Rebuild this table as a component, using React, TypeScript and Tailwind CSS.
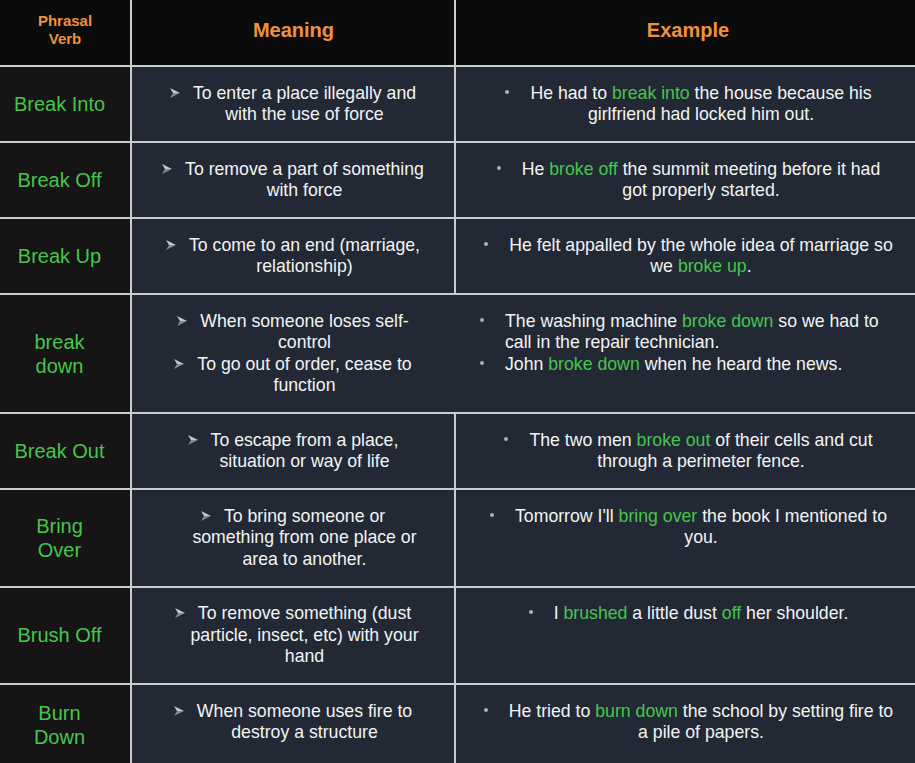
import React from "react";

type Row = {
  verb: string;
  meanings: string[];
  examples: string[];
  left?: boolean;
};

// green words are wrapped in [ ]
const rows: Row[] = [
  {
    verb: "Break Into",
    meanings: ["To enter a place illegally and with the use of force"],
    examples: ["He had to [break into] the house because his girlfriend had locked him out."],
  },
  {
    verb: "Break Off",
    meanings: ["To remove a part of something with force"],
    examples: ["He [broke off] the summit meeting before it had got properly started."],
  },
  {
    verb: "Break Up",
    meanings: ["To come to an end (marriage, relationship)"],
    examples: ["He felt appalled by the whole idea of marriage so we [broke up]."],
  },
  {
    verb: "break\ndown",
    meanings: ["When someone loses self-control", "To go out of order, cease to function"],
    examples: [
      "The washing machine [broke down] so we had to call in the repair technician.",
      "John [broke down] when he heard the news.",
    ],
    left: true,
  },
  {
    verb: "Break Out",
    meanings: ["To escape from a place, situation or way of life"],
    examples: ["The two men [broke out] of their cells and cut through a perimeter fence."],
  },
  {
    verb: "Bring\nOver",
    meanings: ["To bring someone or something from one place or area to another."],
    examples: ["Tomorrow I'll [bring over] the book I mentioned to you."],
  },
  {
    verb: "Brush Off",
    meanings: ["To remove something (dust particle, insect, etc) with your hand"],
    examples: ["I [brushed] a little dust [off] her shoulder."],
  },
  {
    verb: "Burn\nDown",
    meanings: ["When someone uses fire to destroy a structure"],
    examples: ["He tried to [burn down] the school by setting fire to a pile of papers."],
  },
];

const Arrow = () => (
  <span className="relative">
    <svg
      viewBox="0 0 10 10"
      className="absolute -left-[23px] top-[5px] w-[10px] h-[10px]"
    >
      <polygon points="0,0 10,5 3,5" fill="#c4c8cd" />
      <polygon points="3,5 10,5 0,10" fill="#858a91" />
    </svg>
  </span>
);

const Bullet = () => (
  <span className="relative">
    <span className="absolute -left-[25px] top-[7px] w-[4px] h-[4px] rounded-full bg-[#aab0b7]"></span>
  </span>
);

const Marked = ({ text }: { text: string }) => (
  <>
    {text.split(/\[|\]/).map((part, i) =>
      i % 2 === 1 ? (
        <span key={i} className="text-[#46c64c]">
          {part}
        </span>
      ) : (
        <React.Fragment key={i}>{part}</React.Fragment>
      )
    )}
  </>
);

const App = () => {
  return (
    <div className="h-screen overflow-hidden bg-[#c9cdd2] font-['Liberation_Sans',Arial,sans-serif]">
      <div className="flex flex-col gap-[2px]">
        {/* Header */}
        <div className="grid grid-cols-[130px_322px_1fr] gap-x-[2px] h-[65px] font-bold text-[#ef913f]">
          <div className="bg-[#0b0b0b] flex items-center justify-center text-center text-[15px] leading-[18px] pb-[5px]">
            Phrasal
            <br />
            Verb
          </div>
          <div className="bg-[#0b0b0b] flex items-center justify-center text-[20px] pb-[5px] pl-[1px]">
            Meaning
          </div>
          <div className="bg-[#0b0b0b] flex items-center justify-center text-[20px] pb-[5px] pl-[5px]">
            Example
          </div>
        </div>

        {rows.map((row, idx) => {
          const last = idx === rows.length - 1;
          return (
            <div
              key={row.verb}
              className="grid grid-cols-[130px_322px_1fr] gap-x-[2px] text-[17.7px] leading-[21.5px] text-[#f3f4f5]"
            >
              <div className="bg-[#161414] flex items-center justify-center text-center whitespace-pre-line text-[20px] leading-[24px] text-[#46c64c] pr-[11px]">
                {row.verb}
              </div>
              <div
                className={
                  "bg-[#222934] pl-[50px] pr-[27px] pt-[15.5px] text-center " +
                  (last ? "pb-[22px]" : "pb-[15.5px]")
                }
              >
                {row.meanings.map((m) => (
                  <p key={m}>
                    <Arrow />
                    {m}
                  </p>
                ))}
              </div>
              <div
                className={
                  "bg-[#222934] pl-[51px] pr-[20px] pt-[15.5px] " +
                  (row.left ? "text-left -ml-[2px]" : "text-center")
                }
              >
                {row.examples.map((e) => (
                  <p key={e}>
                    <Bullet />
                    <Marked text={e} />
                  </p>
                ))}
              </div>
            </div>
          );
        })}
      </div>
    </div>
  );
};

export default App;
